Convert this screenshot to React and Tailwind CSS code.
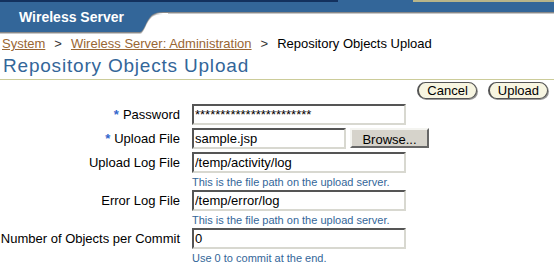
import React from 'react';

const fields = [
  { label: 'Upload Log File', value: '/temp/activity/log', hint: 'This is the file path on the upload server.' },
  { label: 'Error Log File', value: '/temp/error/log', hint: 'This is the file path on the upload server.' },
  { label: 'Number of Objects per Commit', value: '0', hint: 'Use 0 to commit at the end.' }
];

const inputCls =
  'h-[21px] border-2 border-t-[#555] border-l-[#555] border-b-[#d8d8d0] border-r-[#d8d8d0] bg-white px-[1px] text-[13px] text-black outline-none';

const Label = ({ children, required }) => (
  <div className="w-[180px] shrink-0 flex justify-end items-center text-[13px] text-black">
    {required && <span className="text-[#3366cc] font-bold mr-[4px] text-[13px] leading-none">*</span>}
    {children}
  </div>
);

const Header = () => (
  <div>
    <div className="flex h-[2px]">
      <div className="w-[338px] bg-[#13315e]" />
      <div className="w-[75px] bg-[#336699]" />
      <div className="flex-1 bg-[#b8b489]" />
    </div>
    <div className="flex items-start">
      <div className="w-[140px] h-[30px] bg-[#336699] shadow-[0_1px_0_#888,0_2px_0_#c8c8c8] flex items-center pl-[19px] text-white font-bold text-[14px]">
        Wireless Server
      </div>
      <svg width="28" height="33" viewBox="0 0 28 33" className="shrink-0">
        <path d="M0 32 C4 32 6 20 12 15 C15 13 18 12 23 12 H28 V12 H0 Z" fill="#c8c8c8" />
        <path d="M0 31 C4 31 6 19 12 14 C15 12 18 11 23 11 H28 V0 H0 Z" fill="#888" />
        <path d="M0 30 C4 30 6 18 12 13 C15 11 18 10 23 10 H28 V0 H0 Z" fill="#336699" />
      </svg>
      <div className="flex-1 h-[10px] bg-[#336699] shadow-[0_1px_0_#888,0_2px_0_#c8c8c8]" />
    </div>
  </div>
);

const PillButton = ({ children }) => (
  <button className="h-[17px] px-[8px] rounded-full border border-[#555] border-l-2 bg-[#f7f5e1] shadow-[1px_1px_0_#999] text-[13px] leading-[15px] text-black">
    {children}
  </button>
);

export default function App() {
  return (
    <div className="w-[554px] h-[270px] bg-white overflow-hidden font-['Liberation_Sans',Arial,sans-serif]">
      <Header />

      <div className="mt-[1px] pl-[2px] flex text-[13px] leading-[16px]">
        <a className="text-[#996633] underline">System</a>
        <span className="mx-[9px] text-[#333]">&gt;</span>
        <a className="text-[#996633] underline">Wireless Server: Administration</a>
        <span className="mx-[9px] text-[#333]">&gt;</span>
        <span className="text-black">Repository Objects Upload</span>
      </div>

      <div className="mt-[3px] pl-[3px] pb-[2px] border-b border-[#cccc99] text-[19px] leading-[22px] tracking-[0.8px] text-[#336699]">
        Repository Objects Upload
      </div>

      <div className="mt-[2px] pr-[6px] flex justify-end gap-[11px]">
        <PillButton>Cancel</PillButton>
        <PillButton>Upload</PillButton>
      </div>

      <div className="mt-[5px] flex flex-col">
        <div className="flex h-[21px]">
          <Label required>Password</Label>
          <input readOnly value="***********************" className={`${inputCls} ml-[12px] w-[214px]`} />
        </div>
        <div className="flex h-[21px] mt-[3px]">
          <Label required>Upload File</Label>
          <input readOnly value="sample.jsp" className={`${inputCls} ml-[12px] w-[154px]`} />
          <button className="ml-[4px] w-[79px] h-[20px] bg-[#d6d3cb] border-2 border-t-[#f4f4f0] border-l-[#f4f4f0] border-b-[#666] border-r-[#666] text-[13px] text-black">
            Browse...
          </button>
        </div>
        <div className="mt-[3px] flex flex-col">
          {fields.map((f, i) => (
            <div key={i} className="flex flex-col">
              <div className="flex h-[21px]">
                <Label>{f.label}</Label>
                <input readOnly value={f.value} className={`${inputCls} ml-[12px] w-[214px]`} />
              </div>
              <div className="h-[17px] pl-[192px] pt-[3px] text-[11px] leading-[13px] text-[#336699]">{f.hint}</div>
            </div>
          ))}
        </div>
      </div>
    </div>
  );
}
